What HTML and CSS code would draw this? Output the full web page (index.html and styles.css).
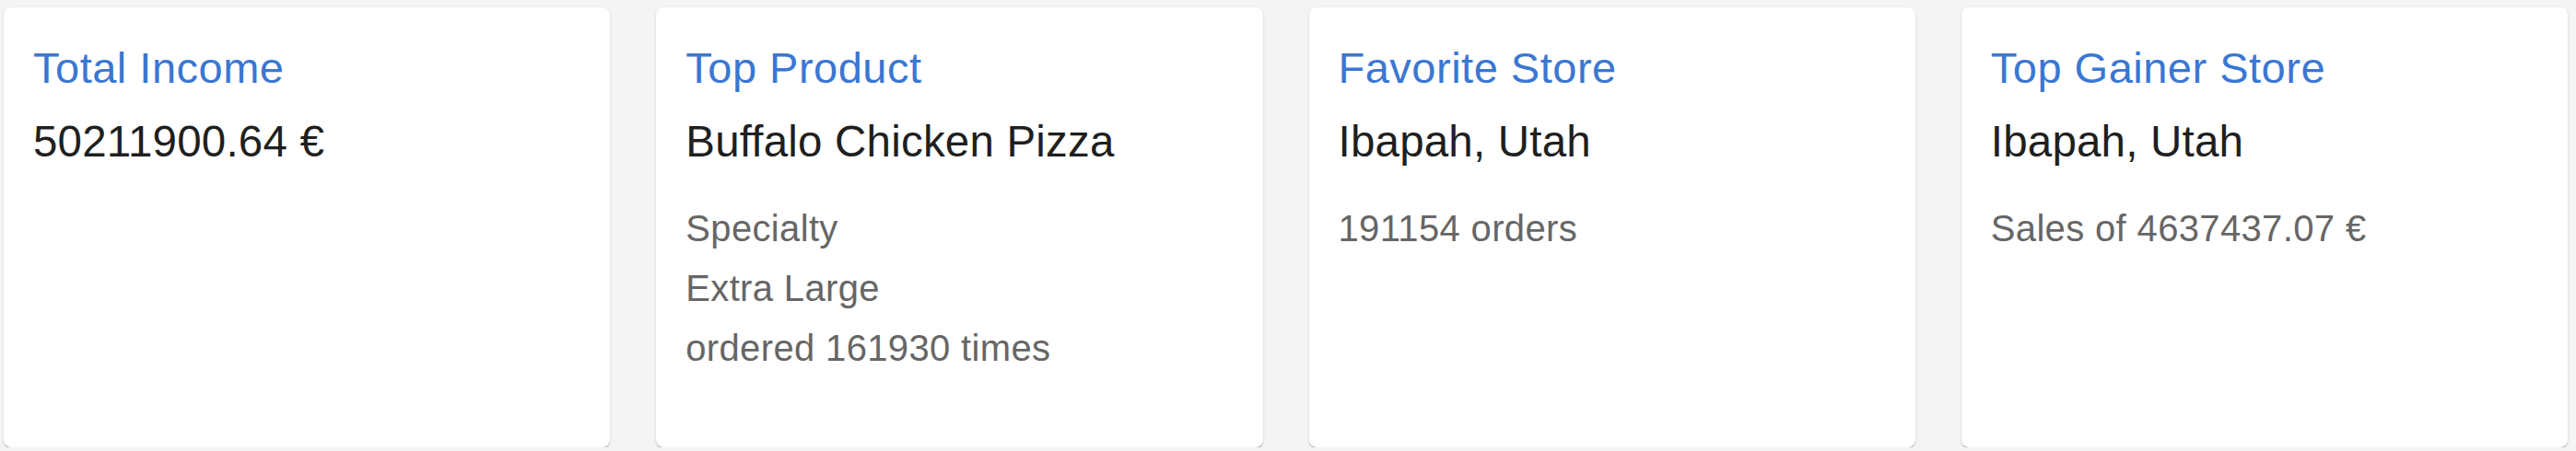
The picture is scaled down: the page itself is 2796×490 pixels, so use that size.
FILE: index.html
```html
<!DOCTYPE html>
<html lang="en">
<head>
<meta charset="utf-8">
<title>Dashboard</title>
<link rel="stylesheet" href="styles.css">
</head>
<body>
<main class="stats">
  <section class="card">
    <h2 class="card-title">Total Income</h2>
    <p class="card-main">50211900.64 €</p>
  </section>
  <section class="card">
    <h2 class="card-title">Top Product</h2>
    <p class="card-main">Buffalo Chicken Pizza</p>
    <ul class="card-details">
      <li>Specialty</li>
      <li>Extra Large</li>
      <li>ordered 161930 times</li>
    </ul>
  </section>
  <section class="card">
    <h2 class="card-title">Favorite Store</h2>
    <p class="card-main">Ibapah, Utah</p>
    <ul class="card-details">
      <li>191154 orders</li>
    </ul>
  </section>
  <section class="card">
    <h2 class="card-title">Top Gainer Store</h2>
    <p class="card-main">Ibapah, Utah</p>
    <ul class="card-details">
      <li>Sales of 4637437.07 €</li>
    </ul>
  </section>
</main>
</body>
</html>
```
FILE: styles.css
```css
html, body {
  margin: 0;
  padding: 0;
  background: #f4f4f4;
  font-family: "Liberation Sans", Arial, Helvetica, sans-serif;
}

.stats {
  display: grid;
  grid-template-columns: repeat(4, 1fr);
  gap: 50px;
  padding: 8px 9px 0 4px;
}

.card {
  background: #ffffff;
  border-radius: 8px;
  height: 478px;
  box-sizing: border-box;
  padding: 35px 32px 32px 32px;
  box-shadow: 0 2px 1px -1px rgba(0,0,0,0.2), 0 1px 1px 0 rgba(0,0,0,0.14), 0 1px 3px 0 rgba(0,0,0,0.12);
}

.card-title {
  margin: 0;
  font-size: 47px;
  font-weight: 400;
  line-height: 62px;
  letter-spacing: 0.5px;
  color: #3a77d2;
}

.card-main {
  margin: 11px 0 0 0;
  font-size: 47.5px;
  line-height: 75px;
  letter-spacing: 0.2px;
  color: #1f1f1f;
}

.card-details {
  list-style: none;
  margin: 25px 0 0 0;
  padding: 0;
  font-size: 40px;
  line-height: 65px;
  letter-spacing: 0.35px;
  color: #666666;
}
```
